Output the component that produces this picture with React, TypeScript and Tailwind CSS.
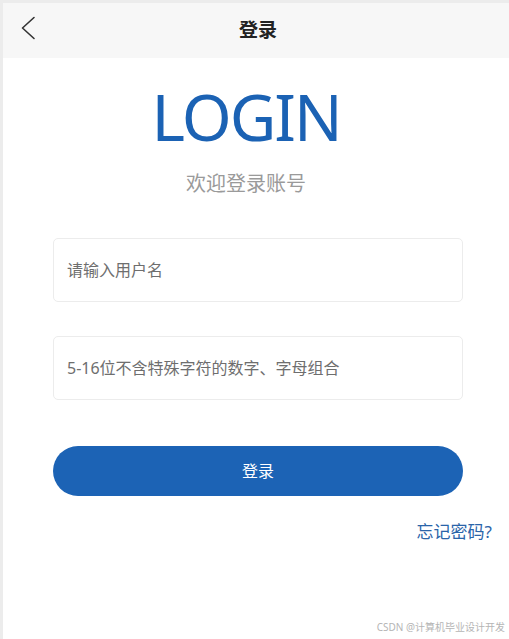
const font = { fontFamily: '"Noto Sans", "Noto Sans CJK SC", sans-serif' };

const App = () => {
  return (
    <div
      className="h-[639px] w-[509px] bg-white border-l-[3px] border-t-[3px] border-[#ececec] flex flex-col"
      style={font}
    >
      <header className="h-[55px] bg-[#f7f7f7] flex items-center relative">
        <svg className="absolute left-[17px] top-[13px]" width="16" height="24" viewBox="0 0 16 24" fill="none">
          <path d="M14 1.5 L2.5 12 L14 22.5" stroke="#333" strokeWidth="1.6" strokeLinecap="round" strokeLinejoin="round" />
        </svg>
        <h1 className="flex-1 text-center text-[19px] font-bold text-[#222] pl-[4px]">登录</h1>
      </header>

      <main className="flex flex-col">
        <div className="flex flex-col items-center pr-[20px]">
          <div className="mt-[19px] text-[64px] leading-[80px] text-[#1b62b4] tracking-[-2px]">
            LOGIN
          </div>
          <p className="mt-[13px] text-[20px] leading-[28px] text-[#9a9a9a]">欢迎登录账号</p>
        </div>

        <div className="mt-[40px] ml-[50px] w-[410px] flex flex-col gap-[34px]">
          <div className="h-[64px] border border-[#ececec] rounded-[5px] flex items-center px-[13px] text-[16px] text-[#6e6e6e]">
            请输入用户名
          </div>
          <div className="h-[64px] border border-[#ececec] rounded-[5px] flex items-center px-[13px] text-[16px] text-[#6e6e6e]">
            5-16位不含特殊字符的数字、字母组合
          </div>
          <button className="mt-[12px] h-[50px] rounded-full bg-[#1c63b5] text-white text-[16px]">
            登录
          </button>
        </div>

        <div className="w-full flex justify-end pr-[17px] mt-[23px]">
          <span className="text-[17px] text-[#2a64a9]">忘记密码?</span>
        </div>
      </main>

      <div className="mt-auto flex justify-end pr-[4px] pb-[4px]">
        <span className="text-[10px] text-[#b5b5b5]">CSDN @计算机毕业设计开发</span>
      </div>
    </div>
  );
};

export default App;
